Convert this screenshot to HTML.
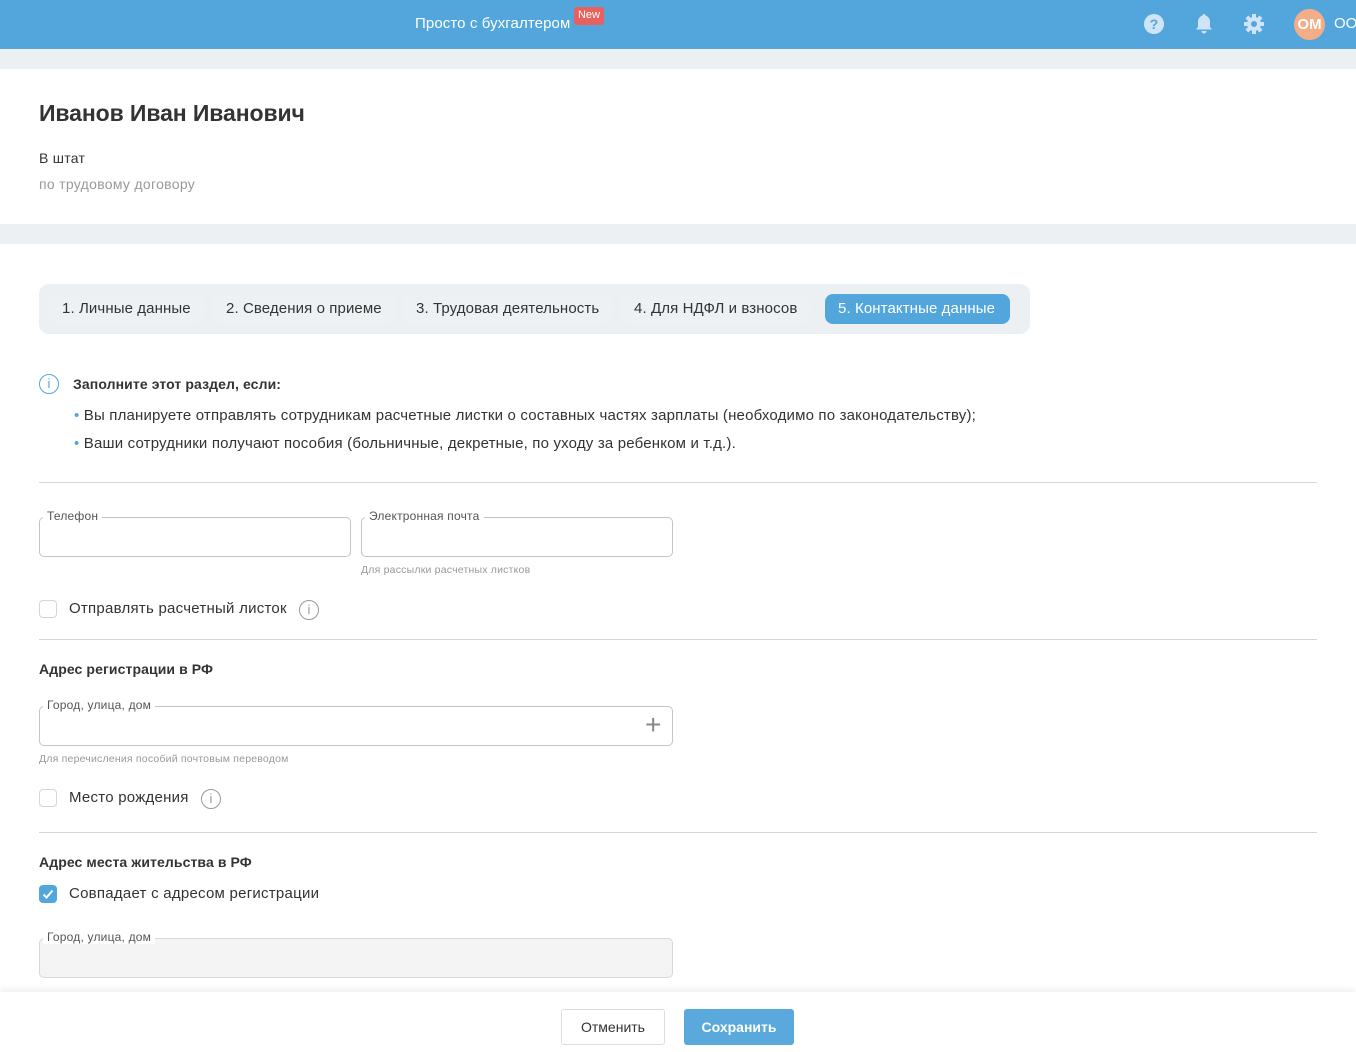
<!DOCTYPE html>
<html><head><meta charset="utf-8"><style>
*{box-sizing:border-box;margin:0;padding:0}
body{width:1356px;height:1052px;overflow:hidden;background:#fff;font-family:"Liberation Sans",Arial,sans-serif;color:#333;position:relative}
.a{position:absolute;white-space:nowrap}
.top{left:0;top:0;width:1356px;height:49px;background:#53a6dc}
.gray{left:0;width:1356px;background:#edf0f3}
.tabs{left:39px;top:284px;width:991px;height:50px;background:#edf0f3;border-radius:10px}
.tab{top:294px;height:30px;line-height:30px;font-size:15px;color:#333;background:#eef1f4;border-radius:8px;padding:0 13px;letter-spacing:0.1px}
.fs{border:1px solid #c4c4c4;border-radius:5px;height:40px}
.lbl{font-size:12px;color:#555;background:#fff;padding:0 4px;letter-spacing:0.2px}
.hr{height:1px;background:#d6d6d6;left:39px;width:1278px}
.cb{width:18px;height:18px;border:1px solid #d6d6d6;border-radius:4px}
.t15{font-size:15px;color:#333;letter-spacing:0.25px}
.info{width:20px;height:20px;border:1.5px solid #999;border-radius:50%;color:#999;font-size:13px;text-align:center;line-height:17px}
.hint{font-size:10.5px;color:#999;letter-spacing:0.2px}
</style></head><body>
<div class="a top"></div>
<div class="a" style="left:415px;top:15px;font-size:15px;color:#fff;letter-spacing:0.1px">Просто с бухгалтером</div>
<div class="a" style="left:574px;top:7px;width:30px;height:18px;background:#e8615e;border-radius:3px;color:#fff;font-size:11px;text-align:center;line-height:16px">New</div>
<svg class="a" style="left:1143px;top:13px" width="22" height="22"><circle cx="11" cy="11" r="10" fill="#cfe5f6"/><text x="11" y="16" text-anchor="middle" font-size="14" font-weight="bold" fill="#53a6dc" font-family="Liberation Sans">?</text></svg>
<svg class="a" style="left:1195px;top:13px" width="18" height="22"><path d="M9 1c1 0 1.5.7 1.5 1.5C13.5 3.5 15 6 15 9v5l2 2.5H1L3 14V9c0-3 1.5-5.5 4.5-6.5C7.5 1.7 8 1 9 1zM6.5 18h5a2.5 2.5 0 01-5 0z" fill="#cfe5f6"/></svg>
<svg class="a" style="left:1243px;top:13px" width="22" height="22" viewBox="0 0 22 22"><g fill="#cfe5f6"><circle cx="11" cy="11" r="7"/><rect x="9" y="1" width="4" height="20"/><rect x="1" y="9" width="20" height="4"/><rect x="9" y="1" width="4" height="20" transform="rotate(45 11 11)"/><rect x="9" y="1" width="4" height="20" transform="rotate(-45 11 11)"/></g><circle cx="11" cy="11" r="3" fill="#53a6dc"/></svg>
<div class="a" style="left:1294px;top:9px;width:31px;height:31px;border-radius:50%;background:#f3ae87;color:#fff;font-size:15px;font-weight:bold;text-align:center;line-height:31px">ОМ</div>
<div class="a" style="left:1334px;top:15px;font-size:15px;color:#fff">ОО</div>

<div class="a gray" style="top:49px;height:20px"></div>
<div class="a" style="left:39px;top:100px;font-size:23px;font-weight:bold;color:#333;letter-spacing:-0.1px">Иванов Иван Иванович</div>
<div class="a t15" style="left:39px;top:150px;font-size:14px">В штат</div>
<div class="a" style="left:39px;top:176px;font-size:14px;color:#999;letter-spacing:0.3px">по трудовому договору</div>
<div class="a gray" style="top:224px;height:20px"></div>

<div class="a tabs"></div>
<div class="a tab" style="left:49px">1. Личные данные</div>
<div class="a tab" style="left:213px">2. Сведения о приеме</div>
<div class="a tab" style="left:403px">3. Трудовая деятельность</div>
<div class="a tab" style="left:621px">4. Для НДФЛ и взносов</div>
<div class="a tab" style="left:825px;width:185px;background:#53a6dc;color:#fff">5. Контактные данные</div>

<div class="a" style="left:39px;top:374px;width:20px;height:20px;border:1.5px solid #53a6dc;border-radius:50%;color:#53a6dc;font-size:13px;text-align:center;line-height:17px">i</div>
<div class="a" style="left:73px;top:376px;font-size:14px;font-weight:bold;letter-spacing:0.1px">Заполните этот раздел, если:</div>
<div class="a t15" style="left:74px;top:407px;letter-spacing:0.18px"><span style="color:#53a6dc">•</span> Вы планируете отправлять сотрудникам расчетные листки о составных частях зарплаты (необходимо по законодательству);</div>
<div class="a t15" style="left:74px;top:435px;letter-spacing:0.18px"><span style="color:#53a6dc">•</span> Ваши сотрудники получают пособия (больничные, декретные, по уходу за ребенком и т.д.).</div>
<div class="a hr" style="top:482px"></div>

<div class="a fs" style="left:39px;top:517px;width:312px"></div>
<div class="a lbl" style="left:43px;top:509px">Телефон</div>
<div class="a fs" style="left:361px;top:517px;width:312px"></div>
<div class="a lbl" style="left:365px;top:509px">Электронная почта</div>
<div class="a hint" style="left:361px;top:564px">Для рассылки расчетных листков</div>
<div class="a cb" style="left:39px;top:600px"></div>
<div class="a t15" style="left:69px;top:600px">Отправлять расчетный листок</div>
<div class="a info" style="left:299px;top:600px">i</div>
<div class="a hr" style="top:639px"></div>

<div class="a" style="left:39px;top:661px;font-size:14px;font-weight:bold;letter-spacing:0.1px">Адрес регистрации в РФ</div>
<div class="a fs" style="left:39px;top:706px;width:634px"></div>
<div class="a lbl" style="left:43px;top:698px">Город, улица, дом</div>
<div class="a" style="left:645px;top:709px;font-size:28px;color:#888;font-weight:100;line-height:32px">+</div>
<div class="a hint" style="left:39px;top:753px">Для перечисления пособий почтовым переводом</div>
<div class="a cb" style="left:39px;top:789px"></div>
<div class="a t15" style="left:69px;top:789px">Место рождения</div>
<div class="a info" style="left:201px;top:789px">i</div>
<div class="a hr" style="top:832px"></div>

<div class="a" style="left:39px;top:854px;font-size:14px;font-weight:bold;letter-spacing:0.1px">Адрес места жительства в РФ</div>
<div class="a" style="left:39px;top:885px;width:18px;height:18px;background:#53a6dc;border-radius:4px"><svg width="18" height="18"><path d="M4.5 9.5l3 3 6-7" stroke="#fff" stroke-width="2" fill="none"/></svg></div>
<div class="a t15" style="left:69px;top:885px">Совпадает с адресом регистрации</div>
<div class="a fs" style="left:39px;top:938px;width:634px;background:#f4f4f4;border-color:#d8d8d8"></div>
<div class="a lbl" style="left:43px;top:930px">Город, улица, дом</div>

<div class="a" style="left:0;top:992px;width:1356px;height:60px;background:#fff;box-shadow:0 -3px 6px rgba(0,0,0,0.06)"></div>
<div class="a" style="left:561px;top:1009px;width:104px;height:36px;border:1px solid #ddd;border-radius:3px;text-align:center;line-height:34px;font-size:14px;color:#333">Отменить</div>
<div class="a" style="left:684px;top:1009px;width:110px;height:36px;background:#5aa9dd;border-radius:3px;text-align:center;line-height:36px;font-size:14px;color:#fff;font-weight:bold">Сохранить</div>
</body></html>
